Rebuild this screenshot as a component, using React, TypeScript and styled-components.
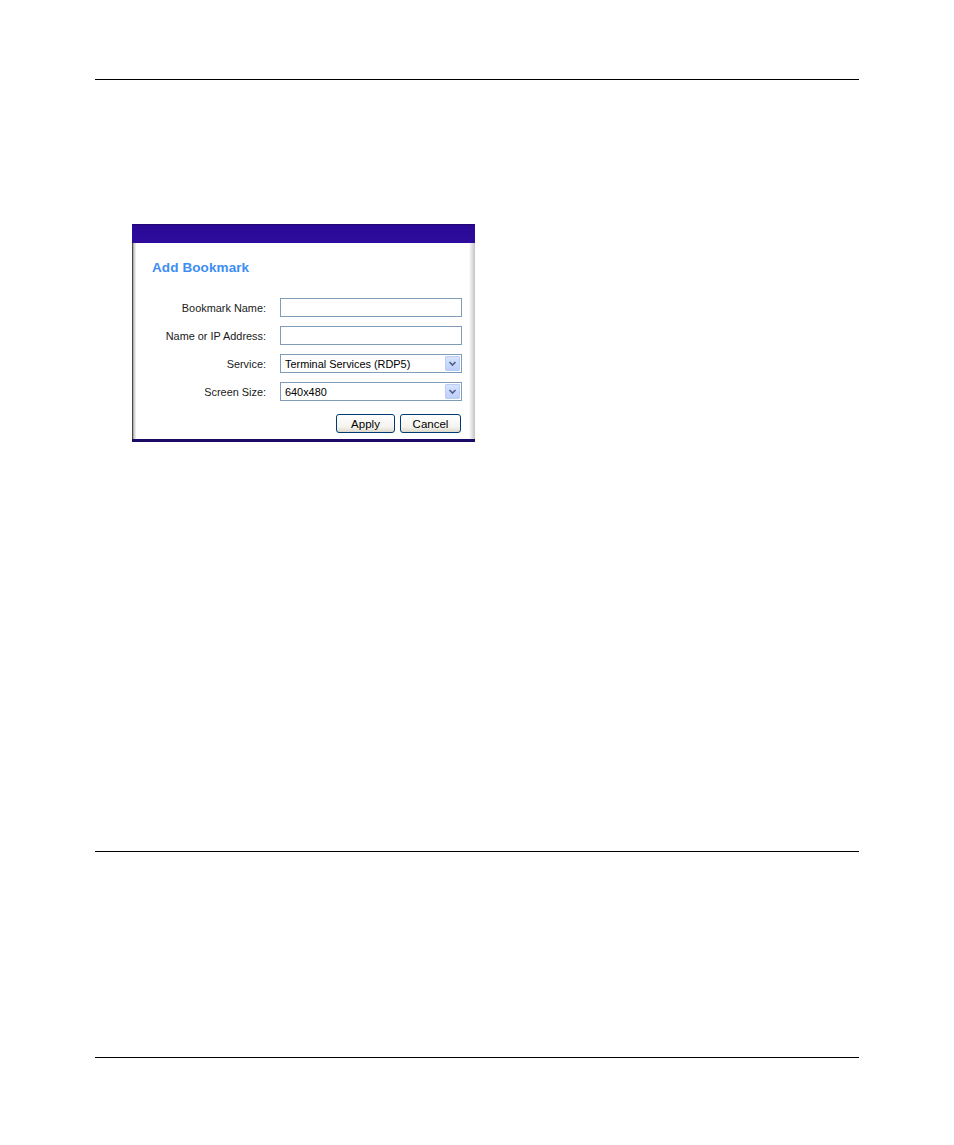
import React from "react";
import styled, { createGlobalStyle } from "styled-components";

const Global = createGlobalStyle`
  html, body { margin: 0; padding: 0; background: #ffffff; }
  body { font-family: "Liberation Sans", Arial, sans-serif; }
`;

const Page = styled.div`
  width: 954px;
  height: 1145px;
  padding-top: 79px;
  box-sizing: border-box;
  background: #fff;
`;

const Rule = styled.div<{ $gap: number }>`
  margin: ${(p) => p.$gap}px 0 0 95px;
  width: 764px;
  height: 0;
  border-top: 1px solid #000;
`;

const Frame = styled.div`
  margin: 144px 0 0 132px;
  width: 343px;
  height: 218px;
  box-sizing: border-box;
  display: flex;
  flex-direction: column;
  background: #fff;
  border-bottom: 3px solid #1c0a66;
`;

const TitleBar = styled.div`
  height: 19px;
  background: linear-gradient(#1d0670 0, #2c0a98 2px, #2d0b9c 100%);
  flex: none;
`;

const Body = styled.div`
  flex: 1;
  display: flex;
  border-left: 1px solid #4a4a4a;
`;

const LeftEdge = styled.div`
  width: 3px;
  background: linear-gradient(to right, #9a9a9a, #d6d6d6, #f4f4f4);
  flex: none;
`;

const RightEdge = styled.div`
  width: 6px;
  background: linear-gradient(to right, #ffffff, #e6e6e6 40%, #c4c4c4);
  flex: none;
`;

const Content = styled.div`
  flex: 1;
  padding: 17px 7px 0 16px;
  display: flex;
  flex-direction: column;
`;

const Title = styled.div`
  font-family: "Liberation Sans", Arial, sans-serif;
  font-weight: bold;
  font-size: 13.5px;
  line-height: 15px;
  color: #3d8df2;
  letter-spacing: 0.1px;
`;

const Form = styled.div`
  margin-top: 23px;
  display: grid;
  grid-template-columns: 1fr 182px;
  column-gap: 14px;
  row-gap: 9px;
  align-items: center;
`;

const Label = styled.div`
  text-align: right;
  font-family: "Liberation Sans", Arial, sans-serif;
  font-size: 10.9px;
  color: #1a1a1a;
`;

const Field = styled.div`
  height: 19px;
  box-sizing: border-box;
  border: 1px solid #7f9db9;
  background: #fff;
  display: flex;
  align-items: center;
  padding-left: 4px;
  font-family: "Liberation Sans", Arial, sans-serif;
  font-size: 10.9px;
  color: #000;
  position: relative;
`;

const DropButton = styled.div`
  position: absolute;
  right: 1px;
  top: 1px;
  bottom: 1px;
  width: 15px;
  box-sizing: border-box;
  border: 1px solid #bccdf4;
  border-radius: 1px;
  background: linear-gradient(#d7e3fe, #bccefa);
  display: flex;
  align-items: center;
  justify-content: center;
`;

const Buttons = styled.div`
  margin-top: 13px;
  display: flex;
  justify-content: flex-end;
  gap: 5px;
  padding-right: 1px;
`;

const Button = styled.div<{ $w: number }>`
  width: ${(p) => p.$w}px;
  height: 19px;
  box-sizing: border-box;
  border: 1px solid #003c74;
  border-radius: 3px;
  background: linear-gradient(#ffffff, #f4f3ee 70%, #dcd8cc);
  display: flex;
  align-items: center;
  justify-content: center;
  font-family: "Liberation Sans", Arial, sans-serif;
  font-size: 11.5px;
  color: #000;
`;

const Chevron = () => (
  <svg width="9" height="7" viewBox="0 0 9 7">
    <path d="M1.5 2 L4.5 5 L7.5 2" fill="none" stroke="#4d6185" strokeWidth="1.6" />
  </svg>
);

export default function App() {
  return (
    <>
      <Global />
      <Page>
        <Rule $gap={0} />
        <Frame>
          <TitleBar />
          <Body>
            <LeftEdge />
            <Content>
              <Title>Add Bookmark</Title>
              <Form>
                <Label>Bookmark Name:</Label>
                <Field />
                <Label>Name or IP Address:</Label>
                <Field />
                <Label>Service:</Label>
                <Field>
                  Terminal Services (RDP5)
                  <DropButton>
                    <Chevron />
                  </DropButton>
                </Field>
                <Label>Screen Size:</Label>
                <Field>
                  640x480
                  <DropButton>
                    <Chevron />
                  </DropButton>
                </Field>
              </Form>
              <Buttons>
                <Button $w={59}>Apply</Button>
                <Button $w={61}>Cancel</Button>
              </Buttons>
            </Content>
            <RightEdge />
          </Body>
        </Frame>
        <Rule $gap={409} />
        <Rule $gap={205} />
      </Page>
    </>
  );
}
